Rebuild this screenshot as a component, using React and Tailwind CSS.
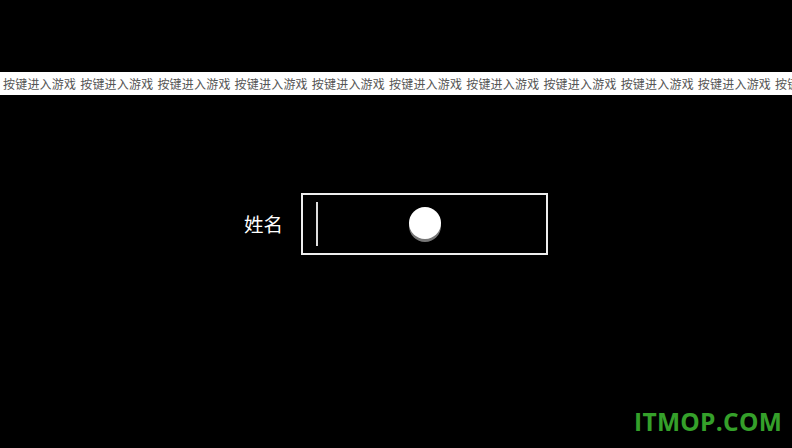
export default function App() {
  const items = Array.from({ length: 11 });
  return (
    <div className="relative w-[792px] h-[448px] overflow-hidden bg-black font-['Noto_Sans_CJK_SC','Noto_Sans',sans-serif]">
      <div className="pt-[72px]">
        <div className="flex h-[23px] items-center gap-[4px] overflow-hidden whitespace-nowrap bg-white pl-[3px] text-[12px] leading-none text-[#555]">
          {items.map((_, i) => (
            <span key={i} className="shrink-0 tracking-[0.2px]">按键进入游戏</span>
          ))}
        </div>
      </div>

      <div className="mt-[98px] flex items-center pl-[244px]">
        <span className="text-[19.5px] leading-none text-white">姓名</span>
        <div className="ml-[18px] flex h-[62px] w-[247px] items-center border-2 border-[#eee] pl-[13px]">
          <div className="h-[44px] w-[2px] bg-[#ddd]" />
          <div className="ml-[91px] mb-[3px] h-[32px] w-[32px] rounded-full bg-white shadow-[0_3px_0_#777]" />
        </div>
      </div>

      <div className="absolute left-[634px] top-[410px] text-[24.5px] font-bold leading-none tracking-[0.3px] text-[#35a02a] font-['Open_Sans',sans-serif]">
        ITMOP.COM
      </div>
    </div>
  );
}
